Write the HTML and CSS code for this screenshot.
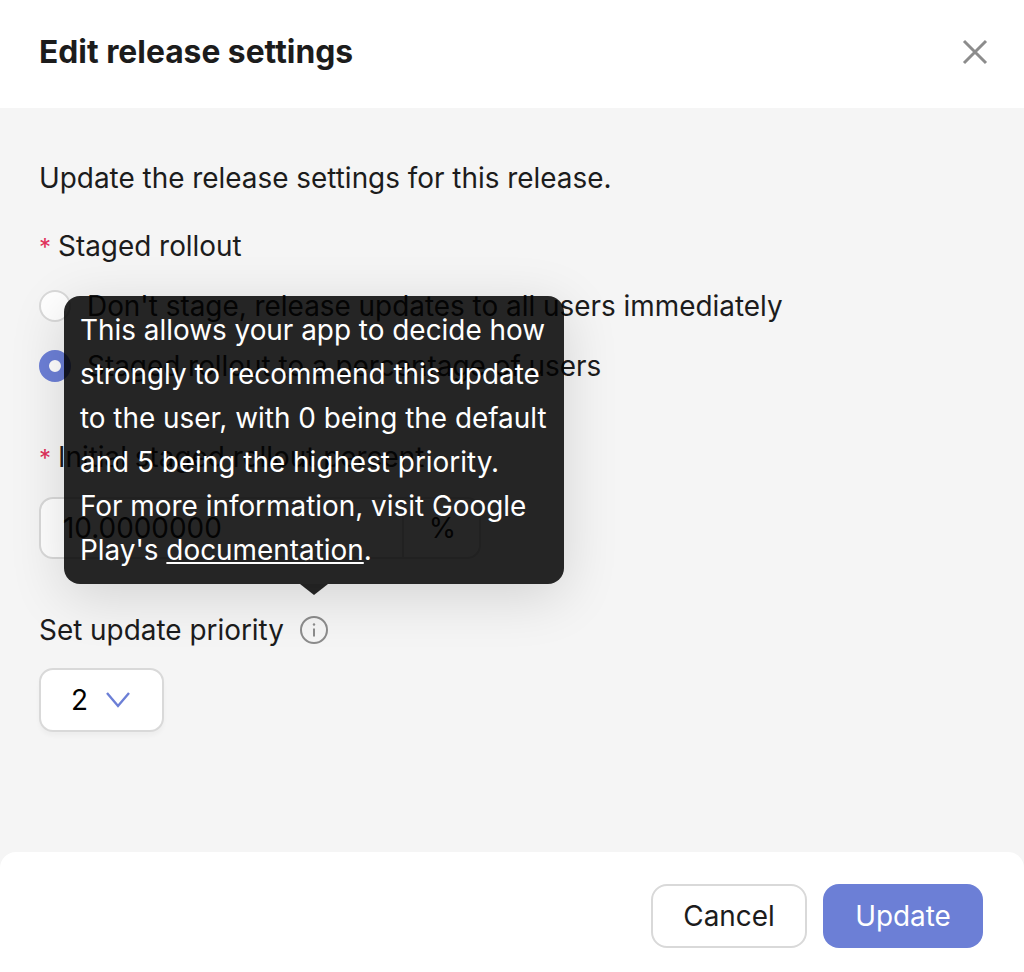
FILE: index.html
```html
<!DOCTYPE html>
<html lang="en">
<head>
  <meta charset="UTF-8">
  <title>Edit release settings</title>
  <link rel="stylesheet" href="styles.css">
</head>
<body>
  <div class="modal">
    <header class="modal-header">
      <h1>Edit release settings</h1>
      <button class="close-btn" aria-label="Close">
        <svg viewBox="0 0 26 26" width="26" height="26"><path d="M2 2l22 22M24 2L2 24"/></svg>
      </button>
    </header>

    <main class="modal-body">
      <p class="intro">Update the release settings for this release.</p>

      <div class="field-label stage-label"><span class="required">*</span>Staged rollout</div>
      <label class="radio-row">
        <span class="radio"></span>
        Don't stage, release updates to all users immediately
      </label>
      <label class="radio-row">
        <span class="radio checked"></span>
        Staged rollout to a percentage of users
      </label>

      <div class="field-label percent-label"><span class="required">*</span>Initial staged rollout percent</div>
      <div class="percent-input">
        <span class="percent-value">10.0000000</span>
        <span class="percent-addon">%</span>
      </div>

      <div class="priority">
        <div class="priority-label">
          Set update priority
          <span class="info-wrap">
            <svg class="info-icon" viewBox="0 0 28 28" width="28" height="28">
              <circle cx="14" cy="14" r="13"/>
              <path d="M14 12.5v8"/>
              <circle class="info-dot" cx="14" cy="8.5" r="1.2"/>
            </svg>
            <div class="tooltip">
              This allows your app to decide how strongly to recommend this update to the user, with 0 being the default and 5 being the highest priority.<br>
              For more information, visit Google Play's <a href="#">documentation</a>.
            </div>
          </span>
        </div>
        <div class="select">
          <span>2</span>
          <svg viewBox="0 0 24 16" width="24" height="16"><path d="M1 1l11 13L23 1"/></svg>
        </div>
      </div>
    </main>

    <footer class="modal-footer">
      <button class="button">Cancel</button>
      <button class="button primary">Update</button>
    </footer>
  </div>
</body>
</html>
```

FILE: styles.css
```css
:root {
  --primary: #6c7fd6;
  --text: #1c1c1c;
  --border: #d9d9d9;
  --background: #f5f5f5;
}

* {
  margin: 0;
  padding: 0;
  box-sizing: border-box;
}

body {
  font-family: Inter, "Liberation Sans", sans-serif;
  font-size: 27.9px;
  line-height: 44px;
  color: var(--text);
  background-color: #fff;
  overflow: hidden;
}

.modal {
  height: 972px;
  display: flex;
  flex-direction: column;
  background-color: var(--background);
}

.modal-header {
  height: 108px;
  flex: none;
  display: flex;
  align-items: center;
  justify-content: space-between;
  padding: 0 36px 4px 39px;
  background-color: #fff;
}

.modal-header h1 {
  font-size: 31.8px;
  font-weight: 700;
}

.close-btn {
  display: flex;
  border: none;
  background: none;
}

.close-btn path {
  fill: none;
  stroke: #8c8c8c;
  stroke-width: 3;
}

.modal-body {
  flex: 1;
  padding: 48px 39px 0;
}

.intro {
  margin-bottom: 24px;
}

.field-label {
  display: flex;
  align-items: baseline;
}

.required {
  width: 19px;
  color: #e0305a;
  font-size: 24px;
}

.radio-row {
  display: flex;
  align-items: center;
  height: 60px;
}

.stage-label {
  margin-bottom: 6px;
}

.radio {
  width: 32px;
  height: 32px;
  margin-right: 16px;
  border-radius: 50%;
  border: 2px solid var(--border);
  background-color: #fff;
}

.radio.checked {
  border: 10px solid var(--primary);
}

.percent-label {
  margin-top: 39px;
  margin-bottom: 16px;
}

.percent-input {
  width: 442px;
  height: 62px;
  display: flex;
  border: 2px solid var(--border);
  border-radius: 14px;
  background-color: #fff;
}

.percent-value {
  flex: 1;
  padding: 7px 0 0 22px;
  border-right: 2px solid var(--border);
}

.percent-addon {
  width: 75px;
  padding: 7px 0 0 2px;
  text-align: center;
}

.priority {
  margin-top: 49px;
}

.priority-label {
  display: flex;
  align-items: center;
  margin-bottom: 16px;
}

.info-wrap {
  position: relative;
  display: flex;
  margin-left: 16px;
}

.info-icon circle {
  fill: none;
  stroke: #8c8c8c;
  stroke-width: 2;
}

.info-icon path {
  stroke: #8c8c8c;
  stroke-width: 2;
}

.info-icon .info-dot {
  fill: #8c8c8c;
  stroke: none;
}

.tooltip {
  position: absolute;
  left: -236px;
  bottom: 60px;
  width: 500px;
  height: 288px;
  padding: 12px 15px 12px 16px;
  border-radius: 16px;
  color: #fff;
  background-color: rgba(0, 0, 0, 0.85);
  box-shadow: 0 12px 56px rgba(0, 0, 0, 0.14);
}

.tooltip::after {
  content: "";
  position: absolute;
  left: 236px;
  bottom: -11px;
  border-left: 14px solid transparent;
  border-right: 14px solid transparent;
  border-top: 11px solid rgba(0, 0, 0, 0.85);
}

.tooltip a {
  color: #fff;
}

.select {
  width: 125px;
  height: 64px;
  display: flex;
  align-items: center;
  gap: 18px;
  padding-left: 30px;
  border: 2px solid var(--border);
  border-radius: 14px;
  background-color: #fff;
  color: #000;
  box-shadow: 0 4px 4px rgba(0, 0, 0, 0.03);
}

.select path {
  fill: none;
  stroke: var(--primary);
  stroke-width: 2.4;
}

.modal-footer {
  height: 120px;
  flex: none;
  display: flex;
  justify-content: flex-end;
  gap: 16px;
  padding: 32px 41px 0 0;
  border-radius: 16px 16px 0 0;
  background-color: #fff;
}

.button {
  width: 156px;
  height: 64px;
  border: 2px solid var(--border);
  border-radius: 16px;
  background-color: #fff;
  color: var(--text);
  font: inherit;
}

.button.primary {
  width: 160px;
  border: none;
  background-color: var(--primary);
  color: #fff;
}
```
